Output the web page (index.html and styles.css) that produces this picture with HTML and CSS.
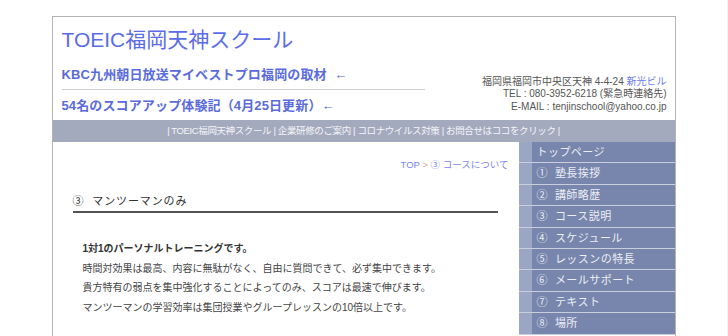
FILE: index.html
```html
<!DOCTYPE html>
<html lang="ja">
<head>
    <meta charset="UTF-8">
    <title>TOEIC福岡天神スクール</title>
    <link rel="stylesheet" href="styles.css">
</head>
<body>

<div class="page">
    <div class="header">
        <div class="header-left">
            <div class="site-title">TOEIC福岡天神スクール</div>
            <div class="news news-first">KBC九州朝日放送マイベストプロ福岡の取材 &nbsp;←</div>
            <div class="news">54名のスコアアップ体験記（4月25日更新）←</div>
        </div>

        <div class="address">
            <div>福岡県福岡市中央区天神 4-4-24 <span class="blue">新光ビル</span></div>
            <div>TEL : 080-3952-6218 (緊急時連絡先)</div>
            <div>E-MAIL : tenjinschool@yahoo.co.jp</div>
        </div>
    </div>

    <div class="topnav">
        | TOEIC福岡天神スクール | 企業研修のご案内 | コロナウイルス対策 | お問合せはココをクリック |
    </div>

    <div class="body">
        <div class="content">
            <div class="crumb">TOP <span class="sep">&gt;</span> ③ コースについて</div>

            <div class="heading">③ &nbsp;マンツーマンのみ</div>

            <div class="text">
                <p class="lead">1対1のパーソナルトレーニングです。</p>
                <p>時間対効果は最高、内容に無駄がなく、自由に質問できて、必ず集中できます。</p>
                <p>貴方特有の弱点を集中強化することによってのみ、スコアは最速で伸びます。</p>
                <p>マンツーマンの学習効率は集団授業やグループレッスンの10倍以上です。</p>
            </div>
        </div>

        <div class="sidebar">
            <div class="side-item">トップページ</div>
            <div class="side-item">① &nbsp;塾長挨拶</div>
            <div class="side-item">② &nbsp;講師略歴</div>
            <div class="side-item">③ &nbsp;コース説明</div>
            <div class="side-item">④ &nbsp;スケジュール</div>
            <div class="side-item">⑤ &nbsp;レッスンの特長</div>
            <div class="side-item">⑥ &nbsp;メールサポート</div>
            <div class="side-item">⑦ &nbsp;テキスト</div>
            <div class="side-item">⑧ &nbsp;場所</div>
        </div>
    </div>
</div>

</body>
</html>
```

FILE: styles.css
```css
html, body {
    margin: 0;
    padding: 0;
    overflow: hidden;
}

body {
    background-color: #fff;
    padding-top: 16px;
    font-family: "Liberation Sans", "Noto Sans CJK JP", sans-serif;
    border-right: 1px solid #f2f2f2;
    height: 320px;
}

.page {
    width: 622px;
    height: 320px;
    margin: 0 auto;
    border: 1px solid #b4b4b4;
    border-bottom: none;
    overflow: hidden;
}

.header {
    display: flex;
    justify-content: space-between;
    align-items: flex-end;
    height: 103px;
}

.header-left {
    padding-left: 9px;
    width: 363px;
    align-self: stretch;
}

.site-title {
    margin-top: 10px;
    font-size: 21px;
    line-height: 25px;
    color: #5b6de6;
}

.news {
    font-size: 13px;
    line-height: 17px;
    font-weight: bold;
    color: #5a6bdc;
    letter-spacing: 0.01em;
}

.news-first {
    margin-top: 14px;
    padding-bottom: 6px;
    border-bottom: 1px solid #cfcfcf;
    margin-bottom: 7px;
}

.address {
    padding-right: 8px;
    padding-bottom: 7px;
    text-align: right;
    font-size: 10px;
    line-height: 12.5px;
    color: #555;
}

.address .blue {
    color: #6b7cf0;
}

.topnav {
    height: 22px;
    line-height: 22px;
    background-color: #a4aabe;
    color: #f4f5f8;
    font-size: 9.5px;
    letter-spacing: -0.04em;
    text-align: center;
}

.body {
    display: flex;
}

.content {
    flex: 1;
}

.crumb {
    margin-top: 15px;
    padding-right: 10px;
    text-align: right;
    font-size: 9.5px;
    color: #7a85ee;
}

.crumb .sep {
    color: #e0a0a0;
}

.heading {
    margin: 23px 21px 0 20px;
    padding-bottom: 3px;
    border-bottom: 2px solid #555;
    font-size: 11px;
    line-height: 14px;
    color: #333;
    letter-spacing: 0.08em;
}

.text {
    padding: 26px 0 0 30px;
    font-size: 10px;
    color: #444;
}

.text p {
    margin: 0;
    line-height: 19.7px;
}

.text .lead {
    font-weight: bold;
    color: #333;
}

.sidebar {
    width: 156px;
}

.side-item {
    height: 20.4px;
    line-height: 20.4px;
    border-bottom: 1px solid #c9cede;
    background: linear-gradient(to right, #9ba5c4 13px, #7886ad 13px);
    padding-left: 18px;
    font-size: 11px;
    color: #eceef4;
    letter-spacing: 0.04em;
}
```
